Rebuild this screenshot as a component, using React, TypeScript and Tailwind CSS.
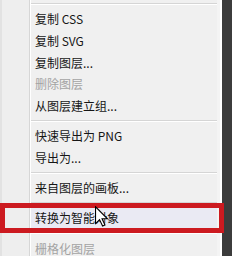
import React from "react";

type Row = { t: "item"; label: string; disabled?: boolean; hl?: boolean } | { t: "sep" };

const rows: Row[] = [
  { t: "sep" },
  { t: "item", label: "复制 CSS" },
  { t: "item", label: "复制 SVG" },
  { t: "item", label: "复制图层..." },
  { t: "item", label: "删除图层", disabled: true },
  { t: "item", label: "从图层建立组..." },
  { t: "sep" },
  { t: "item", label: "快速导出为 PNG" },
  { t: "item", label: "导出为..." },
  { t: "sep" },
  { t: "item", label: "来自图层的画板..." },
  { t: "sep" },
  { t: "item", label: "转换为智能对象", hl: true },
  { t: "sep" },
  { t: "item", label: "栅格化图层", disabled: true },
];

export default function App() {
  return (
    <div
      className="relative w-[232px] h-[256px] overflow-hidden flex bg-[#f0f0f0]"
      style={{ fontFamily: '"Noto Sans CJK SC", "Noto Sans", sans-serif' }}
    >
      {/* left gutter */}
      <div className="w-[2px] bg-[#e2e2e2]" />
      <div className="w-[28px] bg-[#eeeeee] border-r border-[#d6d6d6]" />
      <div className="w-[1px] bg-white" />
      {/* menu body */}
      <div className="w-[186px] flex flex-col">
        {rows.map((r, i) =>
          r.t === "sep" ? (
            <div key={i} className="h-[8.5px] flex flex-col justify-center shrink-0">
              <div className="h-px bg-[#d5d5d5]" />
              <div className="h-px bg-white" />
            </div>
          ) : (
            <div
              key={i}
              className={
                "h-[21.7px] shrink-0 flex items-center pl-[4px] text-[12px] leading-none " +
                (r.disabled ? "text-[#a3a3a3] " : "text-[#161616] ") +
                (r.hl ? "bg-[#eaeaf3]" : "")
              }
            >
              {r.label}
            </div>
          )
        )}
      </div>
      <div className="w-[3px] bg-[#f4f4f4]" />
      <div className="w-[2px] bg-white" />
      <div className="flex-1 bg-[#3c3c3c]" />

      {/* red highlight box */}
      <div className="absolute left-0 top-[203px] w-[224px] h-[30px] border-[5px] border-[#cc1a20]" />

      {/* mouse cursor */}
      <svg
        className="absolute left-[95px] top-[206px]"
        width="13"
        height="21"
        viewBox="0 0 12 19"
      >
        <path
          d="M0.5 0.5 L0.5 16 L4.2 12.4 L7 18.3 L9.2 17.3 L6.5 11.6 L11.5 11.6 Z"
          fill="white"
          stroke="black"
          strokeWidth="1"
          strokeLinejoin="miter"
        />
      </svg>
    </div>
  );
}
